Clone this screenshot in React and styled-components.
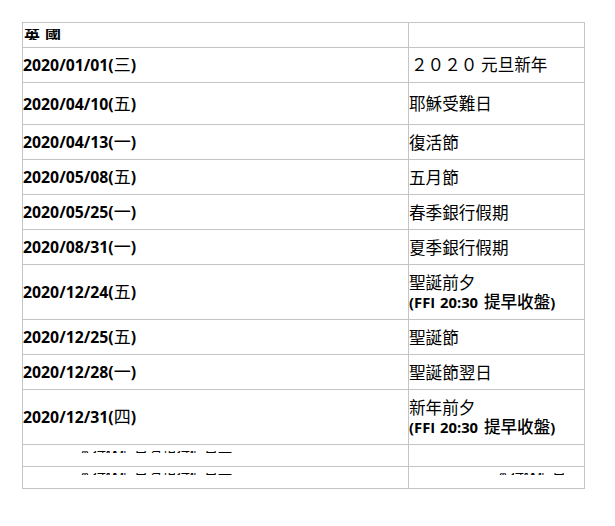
import React from "react";
import styled, { createGlobalStyle } from "styled-components";

const Global = createGlobalStyle`
  html, body { margin: 0; padding: 0; background: #fff; }
  body { font-family: "Open Sans", "Noto Sans CJK TC", sans-serif; color: #000; }
`;

const Page = styled.div`
  padding: 22px 0 0 22px;
  width: 593px;
  box-sizing: border-box;
`;

const Table = styled.table`
  border-collapse: collapse;
  table-layout: fixed;
  width: 563px;
  border: 1px solid #c4c4c4;
`;

const Row = styled.tr`
  height: ${(p) => p.$h}px;
`;

const Cell = styled.td`
  border-width: 1px 0;
  border-style: solid;
  border-color: #c4c4c4;
  border-left: ${(p) => (p.$right ? "1px solid #c4c4c4" : "0")};
  border-right: 0;
  padding: 0;
  vertical-align: ${(p) => (p.$top ? "top" : "middle")};
  width: ${(p) => (p.$right ? "176px" : "386px")};
  box-sizing: border-box;
  overflow: hidden;
`;

const DateText = styled.span`
  display: block;
  margin-top: -1px;
  font: 700 15.8px/20px "Open Sans", "Noto Sans CJK TC", sans-serif;
  color: #000;
`;

const Weekday = styled.span`
  font: 400 17px/20px "Noto Sans CJK TC", sans-serif;
`;

const Holiday = styled.span`
  display: block;
  margin-top: -1px;
  font: 400 16.6px/22px "Noto Sans CJK TC", sans-serif;
  color: #000;
`;

const NewYear = styled(Holiday)`
  margin-top: -2px;
  padding-left: 2px;
`;

const Note = styled.span`
  display: block;
  margin-top: -2px;
  font: 700 14.8px/20px "Open Sans", "Noto Sans CJK TC", sans-serif;
  word-spacing: 1px;
`;

const NoteCjk = styled.span`
  font: 500 16.6px/20px "Noto Sans CJK TC", sans-serif;
  margin-left: 1px;
`;

const Slice = styled.div`
  height: ${(p) => p.$h}px;
  margin-top: ${(p) => p.$top}px;
  margin-left: ${(p) => p.$left}px;
  overflow: hidden;
  white-space: nowrap;
`;

const SliceText = styled.div`
  font: ${(p) => p.$weight} ${(p) => p.$size}px/20px "Noto Sans CJK TC", sans-serif;
  letter-spacing: ${(p) => p.$spacing}px;
  margin-top: ${(p) => p.$shift}px;
`;

const rows = [
  { h: 35, d: "2020/01/01", w: "三", special: true, t: "２０２０ 元旦新年" },
  { h: 42, d: "2020/04/10", w: "五", t: "耶穌受難日" },
  { h: 35, d: "2020/04/13", w: "一", t: "復活節" },
  { h: 35, d: "2020/05/08", w: "五", t: "五月節" },
  { h: 35, d: "2020/05/25", w: "一", t: "春季銀行假期" },
  { h: 35, d: "2020/08/31", w: "一", t: "夏季銀行假期" },
  { h: 55, d: "2020/12/24", w: "五", t: "聖誕前夕", note: true },
  { h: 35, d: "2020/12/25", w: "五", t: "聖誕節" },
  { h: 35, d: "2020/12/28", w: "一", t: "聖誕節翌日" },
  { h: 55, d: "2020/12/31", w: "四", t: "新年前夕", note: true },
];

export default function App() {
  return (
    <Page>
      <Global />
      <Table>
        <tbody>
          <Row $h={25}>
            <Cell $top>
              <Slice $h={11} $top={6} $left={1}>
                <SliceText $weight={700} $size={16} $spacing={5} $shift={-5}>英國</SliceText>
              </Slice>
            </Cell>
            <Cell $right />
          </Row>
          {rows.map((r) => (
            <Row key={r.d} $h={r.h}>
              <Cell>
                <DateText>
                  {r.d}(<Weekday>{r.w}</Weekday>)
                </DateText>
              </Cell>
              <Cell $right>
                {r.special ? <NewYear>{r.t}</NewYear> : <Holiday>{r.t}</Holiday>}
                {r.note && (
                  <Note>
                    (FFI 20:30 <NoteCjk>提早收盤</NoteCjk>)
                  </Note>
                )}
              </Cell>
            </Row>
          ))}
          <Row $h={22}>
            <Cell $top>
              <Slice $h={2} $top={6} $left={55}>
                <SliceText $weight={400} $size={14} $spacing={0} $shift={-9}>本行休假日為銀行假日一</SliceText>
              </Slice>
            </Cell>
            <Cell $right />
          </Row>
          <Row $h={22}>
            <Cell $top>
              <Slice $h={2} $top={6} $left={55}>
                <SliceText $weight={400} $size={14} $spacing={0} $shift={-9}>本行休假日為銀行假日一</SliceText>
              </Slice>
            </Cell>
            <Cell $right $top>
              <Slice $h={2} $top={6} $left={87}>
                <SliceText $weight={400} $size={14} $spacing={0} $shift={-9}>本行休假日</SliceText>
              </Slice>
            </Cell>
          </Row>
        </tbody>
      </Table>
    </Page>
  );
}
